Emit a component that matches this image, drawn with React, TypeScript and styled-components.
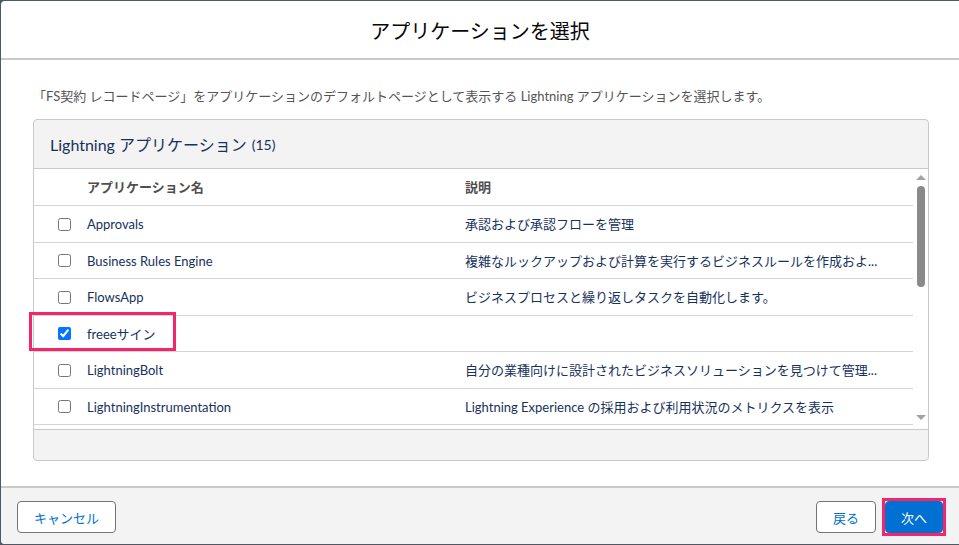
import styled, { createGlobalStyle } from "styled-components";

const GlobalStyle = createGlobalStyle`
    *, *::before, *::after {
        box-sizing: border-box;
    }
    html, body {
        margin: 0;
        padding: 0;
        background: #4f5866;
    }
    body {
        font-family: "Segoe UI", Lato, "Noto Sans CJK JP", sans-serif;
    }
`;

const Modal = styled.div`
    margin: 1px 0 0 1px;
    width: 958px;
    height: 543px;
    background: #ffffff;
    border-radius: 4px 0 0 4px;
    display: flex;
    flex-direction: column;
    overflow: hidden;
`;

const Header = styled.header`
    height: 59px;
    flex-shrink: 0;
    border-bottom: 2px solid #c9c9c9;
    display: flex;
    align-items: center;
    justify-content: center;
`;

const Title = styled.h2`
    margin: 0;
    font-size: 20px;
    font-weight: 400;
    color: #080707;
    line-height: 24px;
    padding-top: 3px;
`;

const Body = styled.div`
    flex: 1;
    padding: 0 30px 0 32px;
`;

const Intro = styled.p`
    margin: 0;
    padding-top: 27px;
    height: 59px;
    font-size: 13px;
    line-height: 19px;
    color: #555555;
`;

const Card = styled.section`
    position: relative;
    height: 342px;
    border: 1px solid #c9c9c9;
    border-radius: 4px;
    background: #f3f3f3;
    display: flex;
    flex-direction: column;
`;

const CardHeader = styled.div`
    height: 49px;
    flex-shrink: 0;
    border-bottom: 1px solid #c9c9c9;
    display: flex;
    align-items: center;
    padding-left: 16px;
    font-size: 16px;
    color: #16325c;
    border-radius: 4px 4px 0 0;
`;

const Count = styled.span`
    font-size: 14px;
    margin-left: 5px;
`;

const ListArea = styled.div`
    height: 261px;
    flex-shrink: 0;
    display: flex;
    background: #ffffff;
    border-bottom: 1px solid #c9c9c9;
`;

const Rows = styled.div`
    flex: 1;
    display: flex;
    flex-direction: column;
`;

const Row = styled.div<{ $head?: boolean; $tall?: boolean }>`
    display: grid;
    grid-template-columns: 53px 378px 1fr;
    align-items: center;
    height: ${p => (p.$head || p.$tall ? "37px" : "36px")};
    border-bottom: 1px solid #d4d4d4;
    font-size: 13px;
    color: ${p => (p.$head ? "#514f4d" : "#16325c")};
    font-weight: ${p => (p.$head ? 700 : 400)};
    flex-shrink: 0;
`;

const CheckCell = styled.div`
    padding-left: 24px;
    display: flex;
    align-items: center;
`;

const Check = styled.input`
    margin: 0;
    width: 13px;
    height: 13px;
    accent-color: #0075ff;
`;

const Cell = styled.div`
    white-space: nowrap;
    overflow: hidden;
    text-overflow: ellipsis;
    padding-right: 32px;
    line-height: 18px;
`;

const Scrollbar = styled.div`
    width: 15px;
    flex-shrink: 0;
    display: flex;
    flex-direction: column;
    align-items: center;
    padding-top: 6px;
`;

const Arrow = styled.div<{ $down?: boolean }>`
    width: 0;
    height: 0;
    border-left: 5px solid transparent;
    border-right: 5px solid transparent;
    ${p =>
        p.$down
            ? "border-top: 5px solid #a3a3a3; margin-top: auto; margin-bottom: 9px;"
            : "border-bottom: 5px solid #a3a3a3;"}
`;

const Thumb = styled.div`
    width: 8px;
    height: 101px;
    margin-top: 6px;
    border-radius: 4px;
    background: #8a8a8a;
`;

const CardFooter = styled.div`
    flex: 1;
    border-radius: 0 0 4px 4px;
`;

const Highlight = styled.div`
    position: absolute;
    left: -5px;
    top: 192px;
    width: 147px;
    height: 39px;
    border: 3px solid #f5256b;
    pointer-events: none;
`;

const Footer = styled.footer`
    height: 58px;
    flex-shrink: 0;
    border-top: 2px solid #c9c9c9;
    background: #f3f3f3;
    display: flex;
    align-items: flex-start;
    padding: 13px 13px 0 16px;
    gap: 6px;
`;

const Button = styled.button<{ $brand?: boolean }>`
    height: 32px;
    padding: ${p => (p.$brand ? "0 15px" : "0 16px")};
    border-radius: 4px;
    font-family: inherit;
    font-size: 13px;
    border: 1px solid ${p => (p.$brand ? "#0070d2" : "#747474")};
    background: ${p => (p.$brand ? "#0070d2" : "#ffffff")};
    color: ${p => (p.$brand ? "#ffffff" : "#0070d2")};
    cursor: pointer;
`;

const Spacer = styled.div`
    flex: 1;
`;

const Marked = styled.div`
    border: 3px solid #f5256b;
    margin-top: -3px;
    display: flex;
`;

const apps = [
    { name: "Approvals", desc: "承認および承認フローを管理", checked: false },
    { name: "Business Rules Engine", desc: "複雑なルックアップおよび計算を実行するビジネスルールを作成およ...", checked: false },
    { name: "FlowsApp", desc: "ビジネスプロセスと繰り返しタスクを自動化します。", checked: false },
    { name: "freeeサイン", desc: "", checked: true },
    { name: "LightningBolt", desc: "自分の業種向けに設計されたビジネスソリューションを見つけて管理...", checked: false },
    { name: "LightningInstrumentation", desc: "Lightning Experience の採用および利用状況のメトリクスを表示", checked: false },
];

export default function App() {
    return (
        <>
            <GlobalStyle />
            <Modal>
                <Header>
                    <Title>アプリケーションを選択</Title>
                </Header>
                <Body>
                    <Intro>
                        「FS契約 レコードページ」をアプリケーションのデフォルトページとして表示する Lightning アプリケーションを選択します。
                    </Intro>
                    <Card>
                        <CardHeader>
                            Lightning アプリケーション<Count>(15)</Count>
                        </CardHeader>
                        <ListArea>
                            <Rows>
                                <Row $head>
                                    <span />
                                    <Cell>アプリケーション名</Cell>
                                    <Cell>説明</Cell>
                                </Row>
                                {apps.map((app, i) => (
                                    <Row key={app.name} $tall={i % 2 === 0}>
                                        <CheckCell>
                                            <Check type="checkbox" defaultChecked={app.checked} />
                                        </CheckCell>
                                        <Cell>{app.name}</Cell>
                                        <Cell>{app.desc}</Cell>
                                    </Row>
                                ))}
                            </Rows>
                            <Scrollbar>
                                <Arrow />
                                <Thumb />
                                <Arrow $down />
                            </Scrollbar>
                        </ListArea>
                        <CardFooter />
                        <Highlight />
                    </Card>
                </Body>
                <Footer>
                    <Button>キャンセル</Button>
                    <Spacer />
                    <Button>戻る</Button>
                    <Marked>
                        <Button $brand>次へ</Button>
                    </Marked>
                </Footer>
            </Modal>
        </>
    );
}
